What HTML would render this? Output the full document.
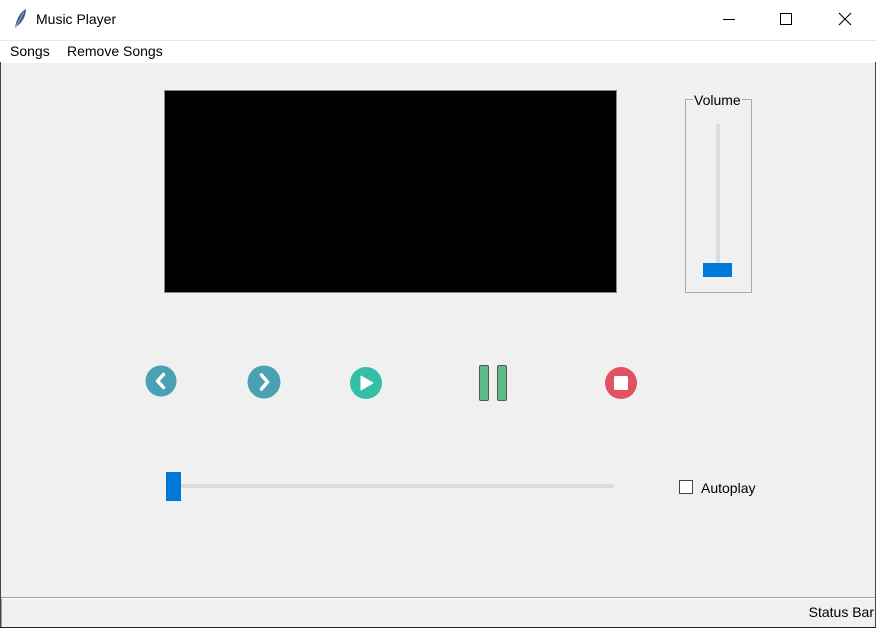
<!DOCTYPE html>
<html><head><meta charset="utf-8"><style>
body{margin:0;width:876px;height:628px;position:relative;overflow:hidden;background:#f0f0f0;font-family:"Liberation Sans",sans-serif;font-size:14px;color:#000}
.a{position:absolute}
</style></head><body>
<div class="a" style="left:0;top:0;width:876px;height:40px;background:#fff"></div>
<svg class="a" style="left:12px;top:8px" width="16" height="22" viewBox="0 0 16 22"><path d="M3 20 C4 12 8 4 14 1 C14 8 10 15 5 18 Z" fill="#3d5a8a"/><path d="M3 20 L12 4" stroke="#9ab" stroke-width="1"/></svg>
<div class="a" style="left:36px;top:11px;font-size:14px">Music Player</div>
<div class="a" style="left:723px;top:19px;width:12px;height:1px;background:#000"></div>
<div class="a" style="left:780px;top:13px;width:10px;height:10px;border:1px solid #000"></div>
<svg class="a" style="left:838px;top:12px" width="14" height="14"><path d="M1 1L13 13M13 1L1 13" stroke="#000" stroke-width="1.1"/></svg>
<div class="a" style="left:0;top:40px;width:876px;height:22px;background:#fff;border-top:1px solid #e8e8e8"></div>
<div class="a" style="left:10px;top:43px">Songs</div>
<div class="a" style="left:67px;top:43px">Remove Songs</div>
<div class="a" style="left:0;top:62px;width:1px;height:566px;background:#444"></div>
<div class="a" style="left:875px;top:62px;width:1px;height:566px;background:#444"></div>
<div class="a" style="left:0;top:627px;width:876px;height:1px;background:#222"></div>
<div class="a" style="left:164px;top:90px;width:451px;height:201px;background:#000;border:1px solid #888"></div>
<div class="a" style="left:685px;top:99px;width:65px;height:192px;border:1px solid #aaa"></div>
<div class="a" style="left:693px;top:92px;background:#f0f0f0;padding:0 1px">Volume</div>
<div class="a" style="left:716px;top:124px;width:4px;height:153px;background:#dcdcdc"></div>
<div class="a" style="left:703px;top:263px;width:29px;height:14px;background:#0078d7"></div>
<svg class="a" style="left:144px;top:365px" width="34" height="34"><circle cx="17" cy="16" r="15.5" fill="#4aa1b3"/><path d="M19.5 9.5L13.5 16l6 6.5" stroke="#fff" stroke-width="3.5" fill="none" stroke-linecap="round" stroke-linejoin="round"/></svg>
<svg class="a" style="left:246px;top:365px" width="36" height="34"><circle cx="18" cy="17" r="16.5" fill="#4aa1b3"/><path d="M15.5 10L21.5 17l-6 7" stroke="#fff" stroke-width="3.5" fill="none" stroke-linecap="round" stroke-linejoin="round"/></svg>
<svg class="a" style="left:349px;top:366px" width="34" height="34"><circle cx="17" cy="17" r="16" fill="#33bfa5"/><path d="M12 10L24 17L12 24Z" fill="#fff" stroke="#fff" stroke-width="1" stroke-linejoin="round"/></svg>
<div class="a" style="left:479px;top:365px;width:8px;height:34px;background:#5dbd8a;border:1px solid #555;border-radius:2px"></div>
<div class="a" style="left:497px;top:365px;width:8px;height:34px;background:#5dbd8a;border:1px solid #555;border-radius:2px"></div>
<svg class="a" style="left:604px;top:366px" width="34" height="34"><circle cx="17" cy="17" r="16" fill="#e25162"/><rect x="10" y="10" width="14" height="14" rx="1.5" fill="#fff"/></svg>
<div class="a" style="left:176px;top:484px;width:438px;height:4px;background:#dcdcdc"></div>
<div class="a" style="left:166px;top:472px;width:15px;height:29px;background:#0078d7"></div>
<div class="a" style="left:679px;top:480px;width:12px;height:12px;border:1px solid #444;background:#fff"></div>
<div class="a" style="left:701px;top:480px">Autoplay</div>
<div class="a" style="left:1px;top:597px;width:874px;height:1px;background:#a0a0a0"></div>
<div class="a" style="left:1px;top:598px;width:874px;height:29px;border-top:1px solid #fff;border-left:1px solid #a0a0a0;box-sizing:border-box"></div>
<div class="a" style="right:2px;top:604px;font-size:14px">Status Bar</div>
</body></html>
